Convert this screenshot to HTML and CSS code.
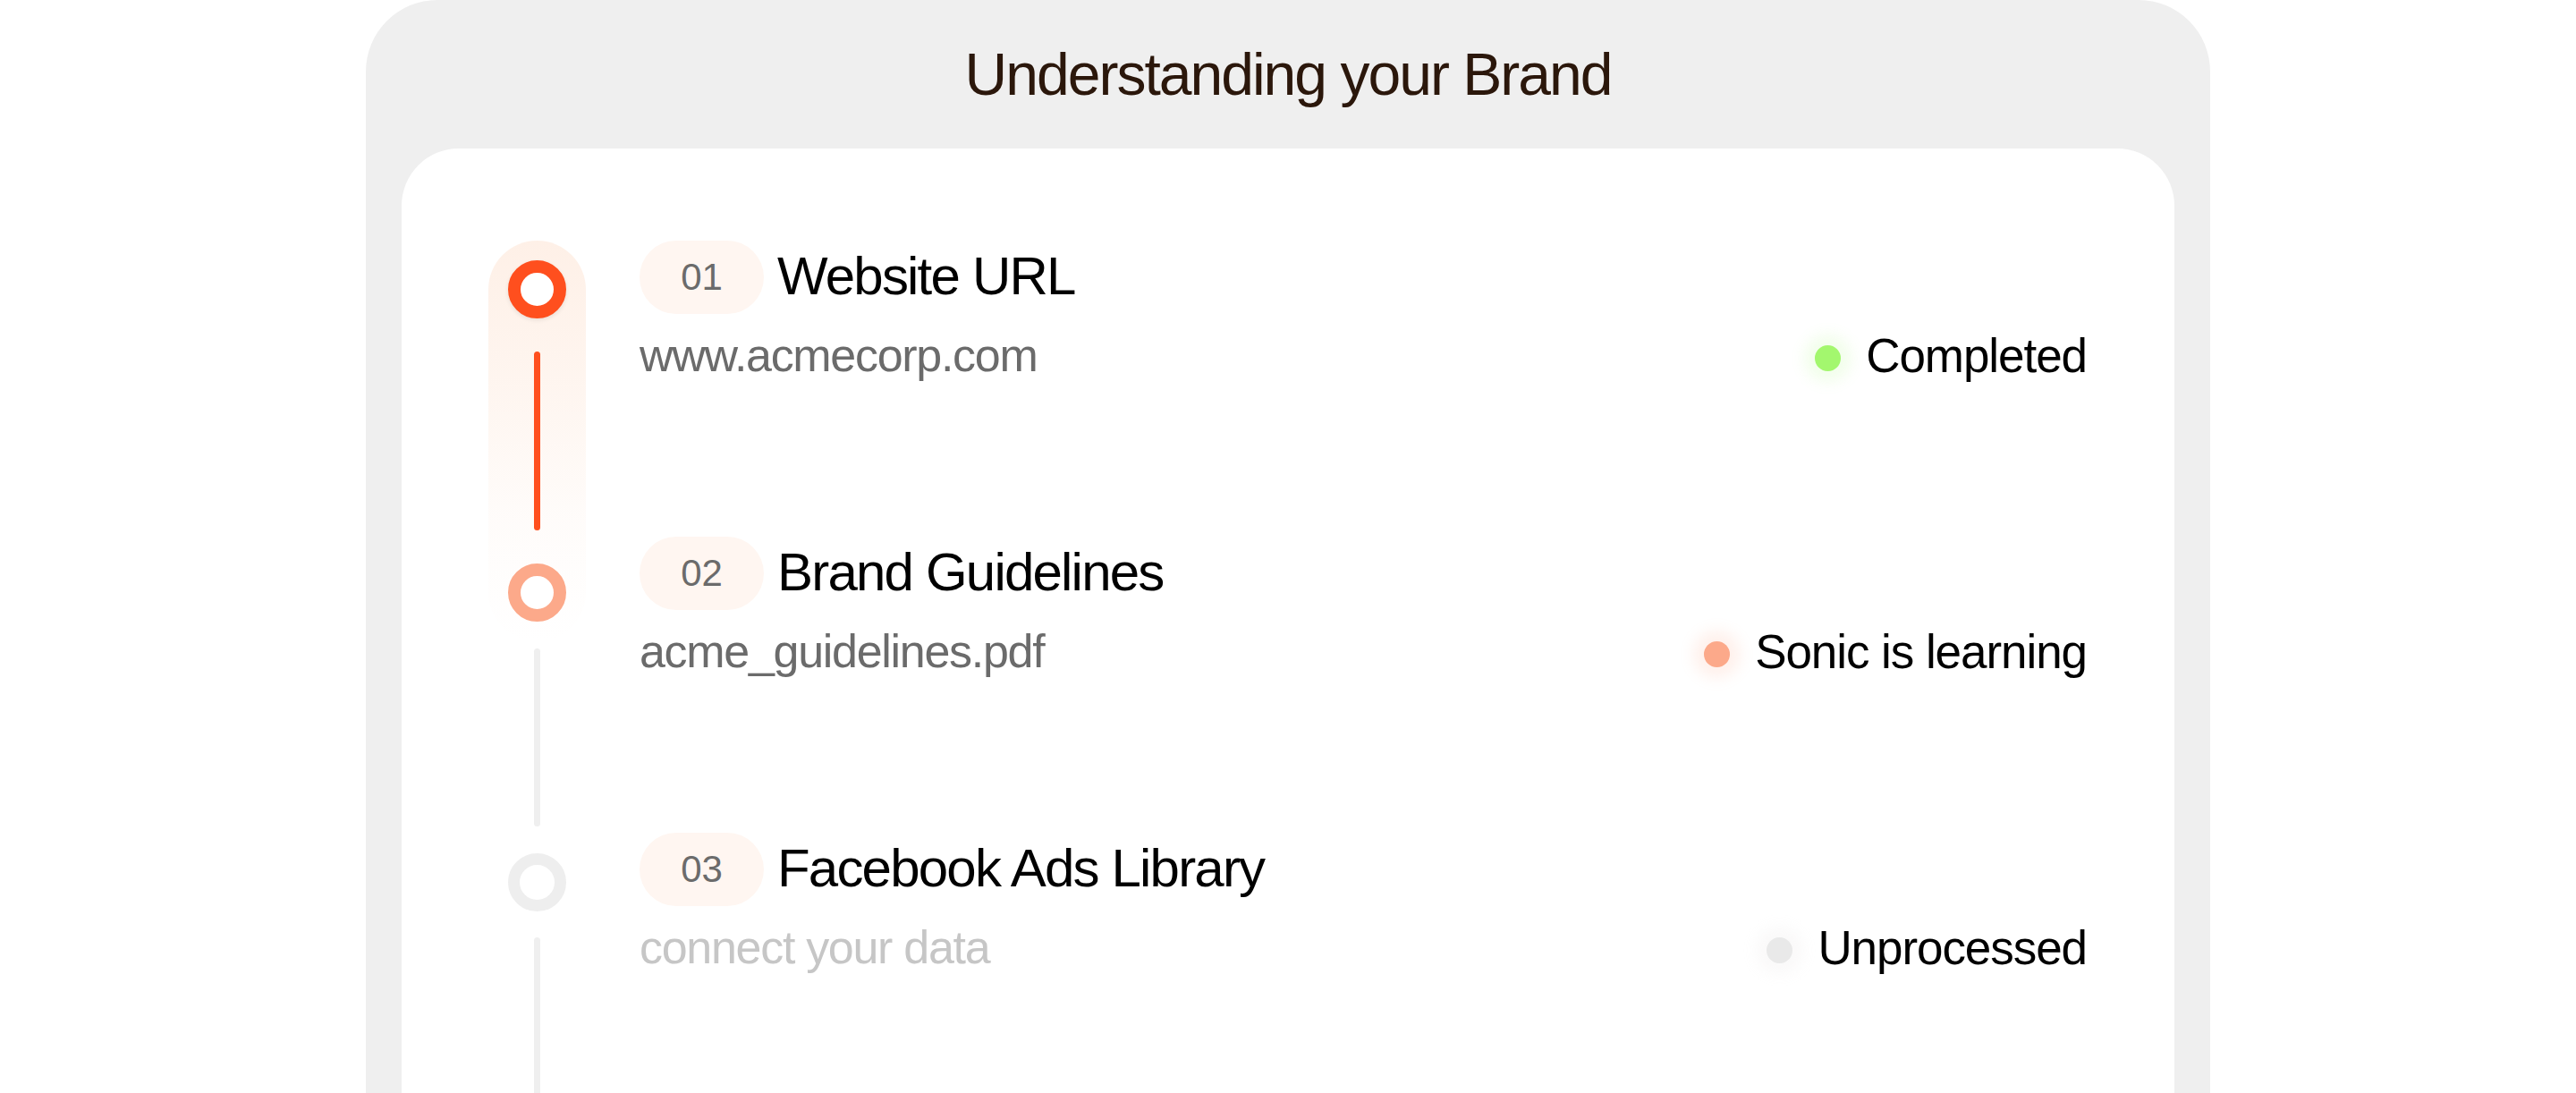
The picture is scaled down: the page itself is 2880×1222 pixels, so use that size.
FILE: index.html
```html
<!DOCTYPE html>
<html>
<head>
<meta charset="utf-8">
<title>Understanding your Brand</title>
<link rel="stylesheet" href="styles.css">
</head>
<body>
<div class="panel">
  <div class="panel-head">Understanding your Brand</div>
  <div class="card">
    <div class="timeline">
      <div class="glow">
        <span class="ring ring-active"></span>
        <span class="bar bar-active"></span>
        <span class="ring ring-learning"></span>
      </div>
      <span class="bar bar-idle bar-after-glow"></span>
      <span class="ring ring-idle"></span>
      <span class="bar bar-idle bar-tail"></span>
    </div>
    <div class="steps">
      <div class="step">
        <div class="step-head">
          <span class="num">01</span>
          <span class="title">Website URL</span>
        </div>
        <div class="step-body">
          <span class="sub">www.acmecorp.com</span>
          <span class="status"><span class="dot dot-done"></span><span class="status-text">Completed</span></span>
        </div>
      </div>
      <div class="step">
        <div class="step-head">
          <span class="num">02</span>
          <span class="title">Brand Guidelines</span>
        </div>
        <div class="step-body">
          <span class="sub">acme_guidelines.pdf</span>
          <span class="status"><span class="dot dot-learning"></span><span class="status-text">Sonic is learning</span></span>
        </div>
      </div>
      <div class="step">
        <div class="step-head">
          <span class="num">03</span>
          <span class="title">Facebook Ads Library</span>
        </div>
        <div class="step-body">
          <span class="sub sub-muted">connect your data</span>
          <span class="status"><span class="dot dot-idle"></span><span class="status-text">Unprocessed</span></span>
        </div>
      </div>
    </div>
  </div>
</div>
</body>
</html>
```

FILE: styles.css
```css
html, body {
  margin: 0;
  padding: 0;
  background: #ffffff;
}

body {
  font-family: "Liberation Sans", Arial, Helvetica, sans-serif;
  height: 1222px;
  overflow: hidden;
}

.panel {
  width: 2062px;
  margin: 0 auto;
  box-sizing: border-box;
  padding: 0 40px;
  background: #efefef;
  border-radius: 80px 80px 0 0;
  min-height: 1222px;
}

.panel-head {
  height: 166px;
  display: flex;
  align-items: center;
  justify-content: center;
  font-size: 66px;
  letter-spacing: -0.03em;
  color: #2b170b;
}

.card {
  background: #ffffff;
  border-radius: 64px 64px 0 0;
  padding: 103px 98px 0 97px;
  display: flex;
  gap: 60px;
  min-height: 1056px;
  box-sizing: border-box;
}

/* timeline */
.timeline {
  width: 109px;
  flex: none;
  display: flex;
  flex-direction: column;
  align-items: center;
}

.glow {
  width: 109px;
  box-sizing: border-box;
  padding: 22px;
  border-radius: 55px;
  display: flex;
  flex-direction: column;
  align-items: center;
  gap: 37px;
  background: linear-gradient(180deg, #fef0e7 0%, rgba(254, 242, 234, 0.75) 35%, rgba(254, 246, 241, 0.35) 70%, rgba(255, 255, 255, 0) 100%);
}

.ring {
  display: block;
  flex: none;
  width: 65px;
  height: 65px;
  box-sizing: border-box;
  border-radius: 50%;
  border: 14.5px solid #eeeeee;
  background: #ffffff;
}

.ring-active {
  border-color: #ff4f1e;
  box-shadow: 0 2px 5px rgba(0, 0, 0, 0.09);
}

.ring-learning {
  border-color: #fca98a;
}

.ring-idle {
  border-color: #eeeeee;
  border-width: 13.5px;
  margin-top: 30px;
}

.bar {
  display: block;
  flex: none;
  width: 7px;
  height: 200px;
  border-radius: 4px;
}

.bar-active {
  background: #ff4f1e;
}

.bar-idle {
  background: #efefef;
}

.bar-after-glow {
  margin-top: 8px;
  height: 199px;
}

.bar-tail {
  margin-top: 29px;
}

/* steps */
.steps {
  flex: 1;
  display: flex;
  flex-direction: column;
  gap: 173px;
}

.step-head {
  display: flex;
  align-items: center;
  gap: 15px;
  height: 82px;
}

.num {
  width: 139px;
  height: 82px;
  border-radius: 41px;
  background: #fff6f1;
  display: flex;
  align-items: center;
  justify-content: center;
  font-size: 42px;
  color: #6b6b6b;
}

.title {
  font-size: 60px;
  letter-spacing: -0.03em;
  color: #000000;
  position: relative;
  top: -2px;
}

.step-body {
  margin-top: 16px;
  height: 60px;
  display: flex;
  justify-content: space-between;
  align-items: center;
}

.sub {
  font-size: 52px;
  letter-spacing: -0.025em;
  color: #6b6b6b;
}

.sub-muted {
  color: #c6c6c6;
}

.status {
  display: flex;
  align-items: center;
  gap: 28px;
  font-size: 53px;
  letter-spacing: -0.02em;
  color: #000000;
}

.dot {
  display: block;
  width: 29px;
  height: 29px;
  border-radius: 50%;
  margin-top: 6px;
}

.dot-done {
  background: #a3f76e;
  box-shadow: 0 0 16px 12px rgba(163, 247, 110, 0.14);
}

.dot-learning {
  background: #fca98a;
  box-shadow: 0 0 16px 12px rgba(252, 169, 138, 0.16);
}

.dot-idle {
  background: #e9e9e9;
  box-shadow: 0 0 16px 12px rgba(220, 215, 210, 0.14);
}
```
